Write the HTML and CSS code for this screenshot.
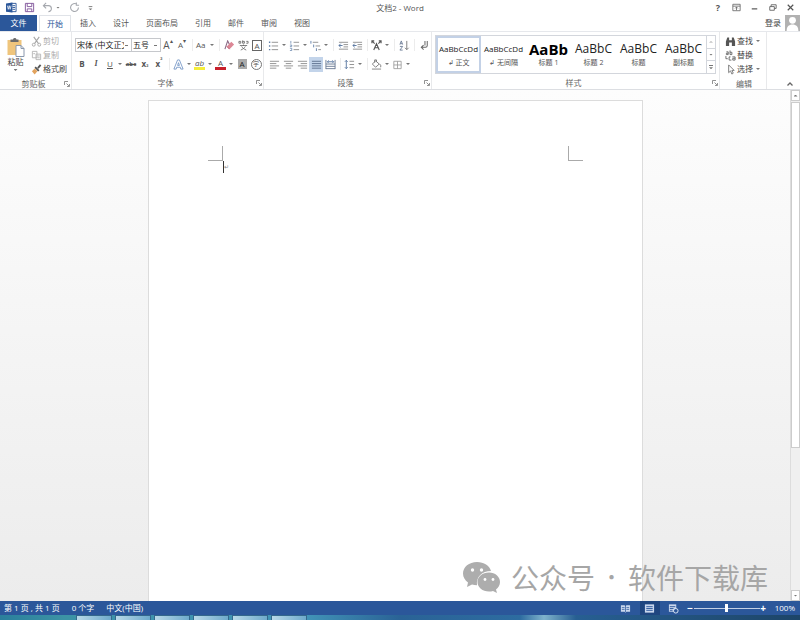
FILE: index.html
```html
<!DOCTYPE html>
<html lang="zh-CN">
<head>
<meta charset="utf-8">
<title>文档2 - Word</title>
<link rel="stylesheet" href="styles.css">
</head>
<body>
<svg class="sprite" aria-hidden="true">
  <symbol id="launcher" viewBox="0 0 6 6"><path d="M.5 4V.5H4M2.500 2.500L5 5M5.500 3v2.500H3" fill="none" stroke="#777" stroke-width=".8"/></symbol>
  <symbol id="bullets" viewBox="0 0 12 12"><path d="M4 2.500h7M4 6.500h7M4 10.500h7" stroke="#8c8c8c"/><path d="M1 2.500h1.500M1 6.500h1.500M1 10.500h1.500" stroke="#5f7ea8" stroke-width="1.500"/></symbol>
  <symbol id="numbers" viewBox="0 0 12 12"><path d="M5 2.500h6M5 6.500h6M5 10.500h6" stroke="#8c8c8c"/><path d="M2 1v3M1 5.500h2v1.500H1M1 9h2v2.500H1" fill="none" stroke="#5f7ea8" stroke-width=".8"/></symbol>
  <symbol id="multilevel" viewBox="0 0 12 12"><path d="M3 2.500h6M6 6.500h5M9 10.500h3" stroke="#8c8c8c"/><path d="M1 1v3M4 5v3M7 9v3" stroke="#5f7ea8"/></symbol>
  <symbol id="outdent" viewBox="0 0 12 12"><path d="M1 2.500h10M6 5h5M6 7.500h5M1 10h10" stroke="#8c8c8c"/><path d="M5 6H1M3 4L1 6l2 2" fill="none" stroke="#55749f"/></symbol>
  <symbol id="lines-left" viewBox="0 0 12 12"><path d="M1 2.500h10M1 5h7M1 7.500h10M1 10h7" stroke="#8c8c8c"/></symbol>
  <symbol id="lines-center" viewBox="0 0 12 12"><path d="M1 2.500h10M3 5h6M1 7.500h10M3 10h6" stroke="#8c8c8c"/></symbol>
  <symbol id="lines-right" viewBox="0 0 12 12"><path d="M1 2.500h10M4 5h7M1 7.500h10M4 10h7" stroke="#8c8c8c"/></symbol>
  <symbol id="lines-full" viewBox="0 0 12 12"><path d="M1 2.500h10M1 5h10M1 7.500h10M1 10h10" stroke="#5c6f8c"/></symbol>
</svg>

<header class="titlebar">
  <div class="quick">
    <svg class="icon" viewBox="0 0 12 12" role="img" aria-label="Word"><path d="M5 1.500h6v9H5z" fill="#fff" stroke="#2b579a"/><path d="M7 4h3M7 6h3M7 8h3" stroke="#2b579a"/><path d="M0 1.500L7 .5v11L0 10.500z" fill="#2b579a"/><path d="M1.500 4l1 4 1-4 1 4 1-4" fill="none" stroke="#fff" stroke-width=".8"/></svg>
    <button class="tool" aria-label="保存"><svg class="icon" viewBox="0 0 12 12"><path d="M1.500 1.500h9v9h-9z" fill="#fff" stroke="#80549a"/><path d="M3.500 1.500v3.500h5V1.500M3.500 10.500v-3h5v3" fill="none" stroke="#80549a"/></svg></button>
    <button class="tool caret" aria-label="撤消"><svg class="icon" viewBox="0 0 12 12"><path d="M4.500 1L1.500 4l3 3M2 4h5a3 3 0 0 1 0 6.500" fill="none" stroke="#a5a8ae" stroke-width="1.200"/></svg></button>
    <button class="tool" aria-label="恢复"><svg class="icon" viewBox="0 0 12 12"><path d="M8.500 2.500A4.300 4.300 0 1 0 10.300 6M8 .5v3h3" fill="none" stroke="#a5a8ae" stroke-width="1.200"/></svg></button>
    <button class="customise" aria-label="自定义快速访问工具栏"><svg class="icon" viewBox="0 0 12 12"><path d="M4 5h4" stroke="#777"/><path d="M4 7h4L6 9z" fill="#777"/></svg></button>
  </div>
  <h1>文档2 - Word</h1>
  <div class="window-buttons">
    <button aria-label="帮助" class="help">?</button>
    <button aria-label="功能区显示选项"><svg class="icon" viewBox="0 0 12 12"><path d="M2 2.500h8v7H2zM2 4.500h8M6 9V5.500M4.500 7L6 5.500 7.500 7" fill="none" stroke="#666" stroke-width=".9"/></svg></button>
    <button aria-label="最小化"><svg class="icon" viewBox="0 0 12 12"><path d="M3 7.500h6" stroke="#555" stroke-width="1.300"/></svg></button>
    <button aria-label="还原"><svg class="icon" viewBox="0 0 12 12"><path d="M3 5h5v4H3zM4.500 5V3H10v4H8" fill="none" stroke="#666"/></svg></button>
    <button aria-label="关闭"><svg class="icon" viewBox="0 0 12 12"><path d="M3 3l6 6M9 3L3 9" stroke="#555" stroke-width="1.300"/></svg></button>
  </div>
</header>

<nav class="tabs">
  <button class="tab file">文件</button>
  <button class="tab active">开始</button>
  <button class="tab">插入</button>
  <button class="tab">设计</button>
  <button class="tab">页面布局</button>
  <button class="tab">引用</button>
  <button class="tab">邮件</button>
  <button class="tab">审阅</button>
  <button class="tab">视图</button>
  <a class="login" href="#">登录<svg viewBox="0 0 14 15" aria-hidden="true"><path d="M0 0h14v15H0z" fill="#b1b1b1"/><circle cx="7" cy="5" r="3.200" fill="#fff"/><path d="M1.500 15c0-4 2-6 5.500-6s5.500 2 5.500 6z" fill="#fff"/></svg></a>
</nav>

<section class="ribbon">
  <div class="group clipboard">
    <div class="clip-body">
      <button class="paste"><svg viewBox="0 0 18 20" aria-hidden="true"><path d="M1 3h14v15H1z" fill="#efc57c"/><path d="M4 5V2.500h2.500a1.800 1.800 0 0 1 3.500 0H12V5z" fill="#6b6b6b"/><path d="M9.500 8.500h5l3 3v8h-8z" fill="#fff" stroke="#8a98ad"/><path d="M14.500 8.500v3h3" fill="none" stroke="#8a98ad"/></svg><span>粘贴</span><i class="down"></i></button>
      <div class="stack">
        <button class="text-tool off"><svg class="icon" viewBox="0 0 12 12"><path d="M3 1l5 7M9 1L4 8" stroke="#a6a6a6" stroke-width="1.200"/><circle cx="3" cy="9.500" r="1.600" fill="none" stroke="#a6a6a6"/><circle cx="9" cy="9.500" r="1.600" fill="none" stroke="#a6a6a6"/></svg>剪切</button>
        <button class="text-tool off"><svg class="icon" viewBox="0 0 12 12"><path d="M1.500 1.500h5v7h-5zM5.500 4.500h5v6h-5z" fill="#fff" stroke="#b5b5b5"/><path d="M7 6.500h2.500M7 8.500h2.500M2.500 4h2" stroke="#b5b5b5"/></svg>复制</button>
        <button class="text-tool"><svg class="icon" viewBox="0 0 12 12"><path d="M7.500 4.500L10.500 1" stroke="#555" stroke-width="2"/><path d="M4.500 3.500l4 4" stroke="#555" stroke-width="2"/><path d="M4 5l3 3-3 3.500L1 8z" fill="#e2a35e"/></svg>格式刷</button>
      </div>
    </div>
    <footer><span>剪贴板</span><svg class="launcher"><use href="#launcher"/></svg></footer>
  </div>

  <div class="group font">
    <div class="row">
      <select class="combo family" aria-label="字体"><option>宋体 (中文正文)</option></select>
      <select class="combo size" aria-label="字号"><option>五号</option></select>
      <button class="tool big" aria-label="增大字号">A<sup>▴</sup></button>
      <button class="tool" aria-label="缩小字号">A<sup>▾</sup></button>
      <i class="sep"></i>
      <button class="tool caret">Aa</button>
      <i class="sep"></i>
      <button class="tool" aria-label="清除格式"><svg class="icon" viewBox="0 0 12 12"><path d="M1 10L4 1l2 4" fill="none" stroke="#8b6a86" stroke-width="1.200"/><path d="M3 7l5-5 3 3-5 5z" fill="#dc8796"/><path d="M3 7l3 3" stroke="#b85b70"/></svg></button>
      <button class="tool" aria-label="拼音指南"><svg class="icon" viewBox="0 0 12 12"><path d="M1 1.500h2v2H1zM5 .5v3h2v-2H5M9 1.500h2v2H9M2 6h8M6 5v1.500M4 7c1 2 3 3 5 4M8 7c-1 2-3 3-5 4" fill="none" stroke="#666" stroke-width=".9"/></svg></button>
      <button class="tool" aria-label="字符边框"><span class="boxed">A</span></button>
    </div>
    <div class="row">
      <button class="tool"><b>B</b></button>
      <button class="tool"><em>I</em></button>
      <button class="tool caret"><u>U</u></button>
      <button class="tool"><s>abc</s></button>
      <button class="tool strong">x<sub>₂</sub></button>
      <button class="tool strong">x<sup>²</sup></button>
      <i class="sep"></i>
      <button class="tool caret" aria-label="文本效果"><svg class="icon" viewBox="0 0 12 12"><path d="M1 11L5 1h2l4 10H8.500L8 9H4l-.5 2zM5 7h2L6 4z" fill="#fff" stroke="#6f92c4" stroke-width=".9"/></svg></button>
      <button class="tool caret"><span class="highlight">ab</span></button>
      <button class="tool caret"><span class="colour">A</span></button>
      <button class="tool" aria-label="字符底纹"><span class="shaded">A</span></button>
      <button class="tool" aria-label="带圈字符"><span class="ring">字</span></button>
    </div>
    <footer><span>字体</span><svg class="launcher"><use href="#launcher"/></svg></footer>
  </div>

  <div class="group paragraph">
    <div class="row">
      <button class="tool caret" aria-label="项目符号"><svg class="icon"><use href="#bullets"/></svg></button>
      <button class="tool caret" aria-label="编号"><svg class="icon"><use href="#numbers"/></svg></button>
      <button class="tool caret" aria-label="多级列表"><svg class="icon"><use href="#multilevel"/></svg></button>
      <i class="sep"></i>
      <button class="tool" aria-label="减少缩进量"><svg class="icon"><use href="#outdent"/></svg></button>
      <button class="tool" aria-label="增加缩进量"><svg class="icon"><use href="#outdent"/></svg></button>
      <i class="sep"></i>
      <button class="tool caret" aria-label="中文版式"><svg class="icon" viewBox="0 0 12 12"><path d="M3 11l3-7 3 7M4 8.500h4M1 1l3 3M1 3.500V1h2.500M11 1L8 4M11 3.500V1H8.500" fill="none" stroke="#555" stroke-width="1.200"/></svg></button>
      <i class="sep"></i>
      <button class="tool" aria-label="排序"><svg class="icon" viewBox="0 0 12 12"><path d="M1 5l1.500-4L4 5M1.500 4h2M1 7h3l-3 4h3" fill="none" stroke="#6f7f98"/><path d="M8.500 1v9.500M6.500 8.500l2 2 2-2" fill="none" stroke="#777"/></svg></button>
      <i class="sep"></i>
      <button class="tool" aria-label="显示编辑标记"><svg class="icon" viewBox="0 0 12 12"><path d="M9 1v5a2 2 0 0 1-2 2H3M5 5.500L2.500 8 5 10.500M6.500 1v5" fill="none" stroke="#666" stroke-width="1.100"/></svg></button>
    </div>
    <div class="row">
      <button class="tool" aria-label="左对齐"><svg class="icon"><use href="#lines-left"/></svg></button>
      <button class="tool" aria-label="居中"><svg class="icon"><use href="#lines-center"/></svg></button>
      <button class="tool" aria-label="右对齐"><svg class="icon"><use href="#lines-right"/></svg></button>
      <button class="tool on" aria-label="两端对齐" aria-pressed="true"><svg class="icon"><use href="#lines-full"/></svg></button>
      <button class="tool" aria-label="分散对齐"><svg class="icon" viewBox="0 0 12 12"><path d="M1 5.500h10M1 8h10M1 10.500h10M1 1v10M11 1v10" stroke="#6c7c95"/><path d="M3 3h6M4 1.500L2.500 3 4 4.500M8 1.500L9.500 3 8 4.500" fill="none" stroke="#55749f"/></svg></button>
      <i class="sep"></i>
      <button class="tool caret" aria-label="行距"><svg class="icon" viewBox="0 0 12 12"><path d="M6 2.500h5M6 6h5M6 9.500h5" stroke="#8c8c8c"/><path d="M2.500 1.500v9M1 3l1.500-1.500L4 3M1 9l1.500 1.500L4 9" fill="none" stroke="#55749f"/></svg></button>
      <i class="sep"></i>
      <button class="tool caret" aria-label="底纹"><svg class="icon" viewBox="0 0 12 12"><path d="M5 2l4 3.500-4 3.500-3.500-3.500zM4 4V1h2v2" fill="#fff" stroke="#777"/><path d="M9.500 5.500q2 2 1 3.500" fill="none" stroke="#777"/><path d="M1 11h10" stroke="#aaa" stroke-width="1.500"/></svg></button>
      <button class="tool caret" aria-label="边框"><svg class="icon" viewBox="0 0 12 12"><path d="M2 2.500h8v8H2zM6 2.500v8M2 6.500h8" fill="none" stroke="#999" stroke-width=".9"/></svg></button>
    </div>
    <footer><span>段落</span><svg class="launcher"><use href="#launcher"/></svg></footer>
  </div>

  <div class="group styles">
    <div class="gallery">
      <button class="style chosen"><span class="sample">AaBbCcDd</span><span>↲ 正文</span></button>
      <button class="style"><span class="sample">AaBbCcDd</span><span>↲ 无间隔</span></button>
      <button class="style"><span class="sample heavy">AaBb</span><span>标题 1</span></button>
      <button class="style"><span class="sample large">AaBbC</span><span>标题 2</span></button>
      <button class="style"><span class="sample large">AaBbC</span><span>标题</span></button>
      <button class="style"><span class="sample large">AaBbC</span><span>副标题</span></button>
      <div class="pager">
        <button aria-label="上一行"><i class="up faint"></i></button>
        <button aria-label="下一行"><i class="down"></i></button>
        <button class="more" aria-label="更多"><i class="down"></i></button>
      </div>
    </div>
    <footer><span>样式</span><svg class="launcher"><use href="#launcher"/></svg></footer>
  </div>

  <div class="group edit">
    <div class="stack">
      <button class="text-tool"><svg class="icon" viewBox="0 0 12 12"><path d="M1 6l1.500-4.500h2V11H1zM11 6L9.500 1.500h-2V11H11zM4.500 4.500h3V7h-3z" fill="#555"/></svg>查找<i class="down"></i></button>
      <button class="text-tool"><svg class="icon" viewBox="0 0 12 12"><path d="M1.500 2h2v3h-2V3.500h2M5.500.5V5h2V2.500h-2M6 7.500H4.500V11H7M8 7.500h3V11H8.500V9H11M1 6.500v3h2" fill="none" stroke="#666"/></svg>替换</button>
      <button class="text-tool"><svg class="icon" viewBox="0 0 12 12"><path d="M4 1v8.500l2-2 1.500 3.500 1.500-1-1.500-3H10z" fill="#fff" stroke="#777"/></svg>选择<i class="down"></i></button>
    </div>
    <footer><span>编辑</span></footer>
  </div>
  <button class="collapse" aria-label="折叠功能区"><svg viewBox="0 0 6 4"><path d="M.5 3.500L3 1l2.500 2.500" fill="none" stroke="#666" stroke-width="1.300"/></svg></button>
</section>

<main class="workspace">
  <div class="canvas">
    <article class="page" contenteditable="true" aria-label="文档">
      <div class="crops"><i class="crop left"></i><i class="crop right"></i></div>
      <p class="caret-line">↵</p>
    </article>
  </div>
  <div class="scroll">
    <button aria-label="向上滚动"><i class="up"></i></button>
    <div class="track"><div class="thumb"></div></div>
    <button aria-label="向下滚动"><i class="down"></i></button>
  </div>
  <div class="watermark">
    <svg viewBox="0 0 37 31" aria-hidden="true"><path d="M14 0C6 0 0 5 0 11.500c0 3.700 2 6.900 5 9L4 25l5-2.500c1.600.5 3.300.7 5 .7C13 15 19 9 28 9 26.500 3.500 21 0 14 0z" fill="#adadad"/><path d="M26 10.500c-6.500 0-11.500 4.200-11.500 9.500S19.500 29.500 26 29.500c1.400 0 2.700-.2 4-.6l4 2.100-1-3.600c2.400-1.700 4-4.300 4-7.400 0-5.300-4.800-9.500-11-9.500z" fill="#adadad"/><g fill="#fff"><circle cx="9.500" cy="8" r="1.700"/><circle cx="18.500" cy="8" r="1.700"/><circle cx="22" cy="17.500" r="1.400"/><circle cx="30" cy="17.500" r="1.400"/></g></svg>
    <span>公众号</span><span class="dot">·</span><span>软件下载库</span>
  </div>
</main>

<footer class="status">
  <span>第 1 页 , 共 1 页</span><span>0 个字</span><span>中文(中国)</span>
  <div class="views">
    <button aria-label="阅读视图"><svg class="icon" viewBox="0 0 12 12"><path d="M1 2.500h4l1 1 1-1h4v7H7l-1 1-1-1H1z" fill="#c9d7ed"/><path d="M6 3v7M2 5h3M2 7h3M7 5h3M7 7h3" stroke="#2b579a" stroke-width=".8"/></svg></button>
    <button class="current" aria-label="页面视图"><svg class="icon" viewBox="0 0 12 12"><path d="M1 1.500h10v9H1z" fill="#c9d7ed"/><path d="M2.500 4h7M2.500 6h7M2.500 8h7" stroke="#2b579a"/></svg></button>
    <button aria-label="Web 版式视图"><svg class="icon" viewBox="0 0 12 12"><path d="M1 1.500h8v8H1z" fill="#c9d7ed"/><path d="M2 4h6M2 6h4M2 8h3" stroke="#2b579a"/><circle cx="8.500" cy="8.500" r="2.500" fill="#2b579a" stroke="#e4ecf8"/></svg></button>
  </div>
  <div class="zoom"><button aria-label="缩小">−</button><input type="range" min="0" max="100" value="50" aria-label="显示比例"><button aria-label="放大">+</button><span>100%</span></div>
</footer>
<div class="taskbar" aria-hidden="true"><i></i><i></i><i></i><i></i><i></i><i></i></div>
</body>
</html>
```
FILE: styles.css
```css
* { box-sizing: border-box; }

body {
  display: flex;
  flex-direction: column;
  height: 100vh;
  margin: 0;
  overflow: hidden;
  background: #fff;
  color: #555;
  font: 8px/12px "Open Sans", "Noto Sans CJK SC", sans-serif;
}

button, a, select {
  padding: 0;
  border: 0;
  background: none;
  color: inherit;
  font: inherit;
  text-decoration: none;
  white-space: nowrap;
}

.sprite { position: absolute; width: 0; height: 0; }
.icon { display: block; flex: none; width: 11px; height: 11px; }

.up, .down {
  display: block;
  flex: none;
  width: 4px;
  height: 2px;
  background: #777;
  clip-path: polygon(0 0, 100% 0, 50% 100%);
}
.up { clip-path: polygon(50% 0, 100% 100%, 0 100%); }
.faint { background: #c4c4c4; }

/* Title bar */
.titlebar {
  display: grid;
  grid-template-columns: 1fr auto 1fr;
  align-items: center;
  flex: none;
  height: 15px;
}
.titlebar h1 { margin: 0; font-size: 8px; font-weight: 400; }
.quick { display: flex; align-items: center; gap: 5px; padding-left: 6px; }
.quick .caret::after { background: #bbb; }
.customise { display: flex; justify-content: center; width: 8px; }
.window-buttons { display: flex; justify-content: flex-end; gap: 4px; padding-right: 3px; }
.window-buttons button { display: flex; justify-content: center; align-items: center; width: 14px; }
.window-buttons .help { font-weight: 700; font-size: 9px; }

/* Tabs */
.tabs { display: flex; gap: 1px; height: 16px; flex: none; }
.tab { padding: 0 8px; }
.tab.file { width: 37px; margin-right: 1px; background: #2b579a; color: #fff; }
.tab.active { border: 1px solid #e0e3e8; border-bottom: 0; padding: 0 7px; color: #2b579a; }
.login { display: flex; align-items: center; gap: 4px; margin-left: auto; color: #444; }
.login svg { width: 15px; height: 16px; }

/* Ribbon */
.ribbon {
  display: flex;
  flex: none;
  height: 59px;
  border-top: 1px solid #e6e8ec;
  border-bottom: 1px solid #dcdee2;
}
.group {
  display: flex;
  flex-direction: column;
  gap: 3px;
  padding: 5px 3px 0;
  border-right: 1px solid #e8e9eb;
}
.clipboard { width: 72px; }
.font { width: 192px; }
.paragraph { width: 168px; }
.styles { width: 288px; padding-top: 3px; }
.edit { width: 47px; padding-top: 3px; }
.edit .stack { padding-left: 2px; }
.group footer { display: flex; align-items: center; margin: auto -2px 0 0; height: 12px; color: #666; }
.group footer span { flex: 1; text-align: center; }
.launcher { width: 6px; height: 6px; }

.row { display: flex; height: 16px; align-items: center; }
.tool { display: flex; flex: none; justify-content: center; align-items: center; width: 14px; height: 15px; }
.tool.caret { width: 21px; justify-content: flex-start; padding-left: 1px; }
.tool.caret::after {
  content: "";
  width: 4px;
  height: 2px;
  margin-left: auto;
  margin-right: 2px;
  background: #777;
  clip-path: polygon(0 0, 100% 0, 50% 100%);
}
.tool.on { background: #c3d4ea; }
.tool.strong, .tool s { font-weight: 700; }
.tool.big { font-size: 10px; }
.tool sup, .tool sub { font-size: 6px; line-height: 6px; }
.tool sup { align-self: flex-start; }
.tool s { font-size: 6px; }
.tool em { font-family: "Liberation Serif", serif; font-weight: 700; }
.tool u { padding-left: 3px; }
.sep { flex: none; width: 6px; height: 12px; background: linear-gradient(#ececec, #ececec) center / 1px 100% no-repeat; }

.combo {
  flex: none;
  height: 14px;
  padding: 0 7px 0 1px;
  appearance: none;
  border: 1px solid #c6c8cc;
  background: linear-gradient(#777, #777) right 3px center / 3px 1px no-repeat #fff;
  color: #222;
  line-height: 12px;
}
.family { width: 57px; }
.size { width: 30px; margin-left: -1px; }
.boxed { width: 10px; border: 1px solid #666; line-height: 9px; }
.shaded { width: 9px; background: #aaa; color: #222; line-height: 10px; }
.ring { width: 11px; border: 1px solid #777; border-radius: 50%; font-size: 6px; line-height: 9px; }
.highlight, .colour { width: 11px; border-bottom: 3px solid #f5ee3a; font-style: italic; line-height: 8px; }
.colour { border-color: #c8202b; font-style: normal; }

/* Clipboard and editing lists */
.clip-body { display: flex; gap: 3px; }
.paste { display: flex; flex-direction: column; align-items: center; width: 25px; color: #444; line-height: 10px; }
.paste svg { width: 19px; height: 20px; }
.paste .down { margin-top: 2px; }
.stack { display: flex; flex-direction: column; gap: 2px; }
.clip-body .stack { margin-top: -2px; }
.text-tool { display: flex; align-items: center; gap: 1px; height: 12px; color: #444; }
.text-tool.off { color: #aaa; }
.text-tool .down { margin-left: 2px; }

/* Style gallery */
.gallery { display: flex; height: 39px; border: 1px solid #d3d6dc; }
.style {
  display: flex;
  flex: 1;
  flex-direction: column;
  align-items: center;
  justify-content: flex-end;
  padding-bottom: 4px;
}
.style span { height: 12px; font-size: 7px; }
.style .sample { display: flex; align-items: center; height: 16px; color: #222; font-size: 8px; }
.style .large { font-size: 12px; }
.style .heavy { color: #000; font-size: 15px; font-weight: 700; }
.chosen { box-shadow: inset 0 0 0 2px #c3d1e6; }
.pager { display: flex; flex-direction: column; width: 9px; border-left: 1px solid #d3d6dc; }
.pager button { display: flex; flex: 1; flex-direction: column; align-items: center; justify-content: center; gap: 1px; }
.pager button + button { border-top: 1px solid #d3d6dc; }
.more::before { content: ""; width: 4px; height: 1px; background: #777; }
.collapse { display: flex; align-self: flex-end; margin: 0 7px 3px auto; }
.collapse svg { width: 6px; height: 4px; }

/* Document area */
.workspace {
  position: relative;
  display: flex;
  flex: 1;
  min-height: 0;
  background: linear-gradient(#fdfdfd, #ececec);
}
.canvas { display: flex; flex: 1; justify-content: center; padding-top: 10px; }
.page {
  width: 495px;
  max-width: 100%;
  padding: 45px 59px 0;
  border: 1px solid #dcdcdc;
  border-bottom: 0;
  background: #fff;
  outline: 0;
}
.crops { display: flex; justify-content: space-between; }
.crop { width: 15px; height: 15px; border-bottom: 1px solid #aaa; }
.crop.left { border-right: 1px solid #aaa; }
.crop.right { border-left: 1px solid #aaa; }
.caret-line { margin: 0 0 0 15px; border-left: 1px solid #333; color: #888; font-size: 6px; line-height: 12px; }

.scroll { display: flex; flex-direction: column; width: 10px; border-left: 1px solid #ddd; background: #f0f0f0; }
.scroll button { display: flex; align-items: center; justify-content: center; height: 11px; border: 1px solid #ccc; background: #fff; }
.track { flex: 1; padding-top: 1px; }
.thumb { height: 71%; border: 1px solid #ccc; background: #fff; }

.watermark {
  position: absolute;
  right: 32px;
  bottom: 4px;
  display: flex;
  align-items: center;
  color: #a6a6a6;
  font: 28px/40px "Noto Sans CJK SC", sans-serif;
}
.watermark svg { width: 37px; height: 31px; margin-right: 11px; }
.watermark .dot { width: 33px; font-size: 20px; text-align: center; }

/* Status bar */
.status {
  display: flex;
  flex: none;
  align-items: center;
  gap: 12px;
  height: 14px;
  padding: 0 5px 0 4px;
  background: #2b579a;
  color: #fff;
}
.views { display: flex; gap: 4px; margin: 0 -9px 0 auto; }
.views button { display: flex; justify-content: center; align-items: center; width: 20px; height: 14px; }
.views .current { background: #1f4680; }
.zoom { display: flex; align-items: center; }
.zoom span { margin-left: 8px; }
.zoom button { width: 7px; font-size: 10px; font-weight: 700; }
.zoom input { width: 66px; height: 9px; margin: 0; appearance: none; background: linear-gradient(#c3d0e5, #c3d0e5) center / 100% 1px no-repeat; }
.zoom input::-webkit-slider-thumb { width: 3px; height: 8px; appearance: none; background: #fff; }

/* Desktop taskbar */
.taskbar {
  display: flex;
  flex: none;
  gap: 3px;
  height: 5px;
  padding-left: 76px;
  background: linear-gradient(90deg, #2a7f9c, #3c93a5 8%, #4295b8 38%, #2a6396 50%, #2d6ca0 65%, #7fb3cc 68%, #275f92 72%, #1d4568);
}
.taskbar i { width: 36px; border: 1px solid #34688c; border-bottom: 0; background: linear-gradient(90deg, #b8d9e8, #6eaacb); }
```
